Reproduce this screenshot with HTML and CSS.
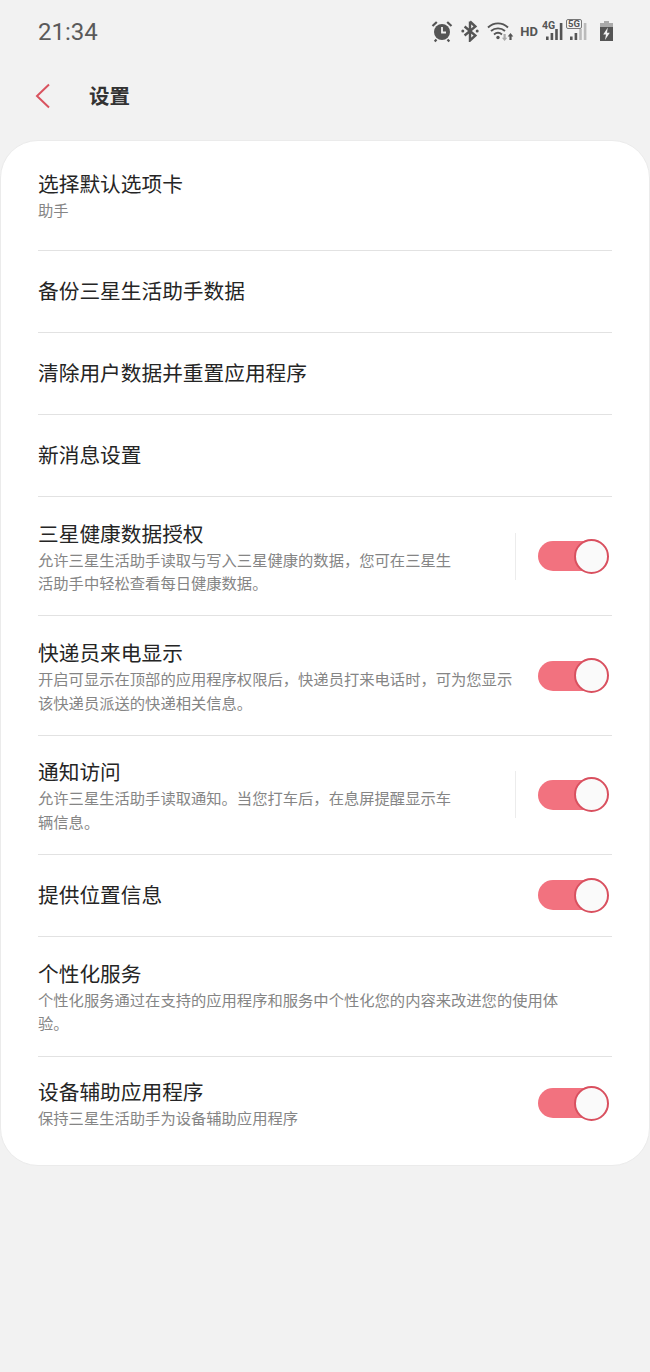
FILE: index.html
```html
<!DOCTYPE html>
<html lang="zh">
	<head>
		<title>设置</title>
		<meta charset="utf-8"/>
		<link rel="stylesheet" href="styles.css">
	</head>
	<body>
		<div class="statusbar">
			<span class="clock">21:34</span>
			<div class="status-icons">
				<svg class="ico" width="22" height="24" viewBox="0 0 22 24">
					<circle cx="11" cy="13" r="8" fill="#555"/>
					<path d="M11 8v5.500h4" fill="none" stroke="#f2f2f2" stroke-width="1.8"/>
					<path d="M1.500 7 5.800 3M20.500 7 16.200 3M5.500 20.500l-1.800 2M16.500 20.500l1.800 2" fill="none" stroke="#555" stroke-width="2.200"/>
				</svg>
				<svg class="ico" width="18" height="22" viewBox="0 0 18 22">
					<path d="M9 1.500v19l5.400-5-10.800-9M9 1.500l5.400 5-10.800 9" fill="none" stroke="#555" stroke-width="2.400"/>
					<circle cx="1.800" cy="11" r="1.500" fill="#555"/>
					<circle cx="16.200" cy="11" r="1.500" fill="#555"/>
				</svg>
				<svg class="ico wifi" width="27" height="22" viewBox="0 0 27 22">
					<path d="M1 7.500C6.800 2 15.200 2 21 7.500M4 11c4-3.500 10-3.500 14 0M7 14.500c2.400-2 5.600-2 8 0" fill="none" stroke="#555" stroke-width="1.900"/>
					<circle cx="11" cy="17.500" r="1.700" fill="#555"/>
					<path d="M16.500 14h2.200v3.800h1.600l-2.700 3.200-2.700-3.200h1.600z" fill="#aaa"/>
					<path d="M23.500 13l2.800 3.400h-1.700V20h-2.200v-3.600h-1.700z" fill="#555"/>
				</svg>
				<span class="hd">HD</span>
				<span class="net">
					<span class="net-label">4G</span>
					<svg width="18" height="17" viewBox="0 0 18 17">
						<path d="M0 17v-3.500h2.600V17zM4.600 17v-7h2.600v7zM9.200 17V6h2.600v11zM13.800 17V0h2.600v17z" fill="#555"/>
					</svg>
				</span>
				<span class="net">
					<span class="net-label boxed">5G</span>
					<svg width="18" height="17" viewBox="0 0 18 17">
						<path d="M0 17v-3.500h2.600V17zM4.600 17v-7h2.600v7z" fill="#555"/>
						<path d="M9.200 17V6h2.600v11zM13.800 17V0h2.600v17z" fill="#bbb"/>
					</svg>
				</span>
				<svg class="ico battery" width="13" height="20" viewBox="0 0 13 20">
					<path d="M4 0h5v2H4z" fill="#aaa"/>
					<path d="M0 2h13v4H0z" fill="#aaa"/>
					<path d="M0 6h13v14H0z" fill="#555"/>
					<path d="M7.800 6.500 3.200 13.500h2.800l-1 5.500 4.800-7.300H7z" fill="#f2f2f2"/>
				</svg>
			</div>
		</div>

		<header class="topbar">
			<svg class="back" width="16" height="26" viewBox="0 0 16 26">
				<path d="M14 1.500 2 13l12 11.500" fill="none" stroke="#d9535f" stroke-width="2"/>
			</svg>
			<h1>设置</h1>
		</header>

		<main class="card">
			<div class="row first">
				<div class="row-text">
					<div class="row-title">选择默认选项卡</div>
					<div class="row-sub">助手</div>
				</div>
			</div>
			<div class="row short">
				<div class="row-text"><div class="row-title">备份三星生活助手数据</div></div>
			</div>
			<div class="row short">
				<div class="row-text"><div class="row-title">清除用户数据并重置应用程序</div></div>
			</div>
			<div class="row short">
				<div class="row-text"><div class="row-title">新消息设置</div></div>
			</div>
			<div class="row tall">
				<div class="row-text narrow">
					<div class="row-title">三星健康数据授权</div>
					<div class="row-sub">允许三星生活助手读取与写入三星健康的数据，您可在三星生活助手中轻松查看每日健康数据。</div>
				</div>
				<span class="divider"></span>
				<span class="switch"></span>
			</div>
			<div class="row tall">
				<div class="row-text wide">
					<div class="row-title">快递员来电显示</div>
					<div class="row-sub">开启可显示在顶部的应用程序权限后，快递员打来电话时，可为您显示该快递员派送的快递相关信息。</div>
				</div>
				<span class="switch"></span>
			</div>
			<div class="row tall">
				<div class="row-text narrow">
					<div class="row-title">通知访问</div>
					<div class="row-sub">允许三星生活助手读取通知。当您打车后，在息屏提醒显示车辆信息。</div>
				</div>
				<span class="divider"></span>
				<span class="switch"></span>
			</div>
			<div class="row short">
				<div class="row-text"><div class="row-title">提供位置信息</div></div>
				<span class="switch"></span>
			</div>
			<div class="row tall">
				<div class="row-text">
					<div class="row-title">个性化服务</div>
					<div class="row-sub">个性化服务通过在支持的应用程序和服务中个性化您的内容来改进您的使用体验。</div>
				</div>
			</div>
			<div class="row last">
				<div class="row-text">
					<div class="row-title">设备辅助应用程序</div>
					<div class="row-sub">保持三星生活助手为设备辅助应用程序</div>
				</div>
				<span class="switch"></span>
			</div>
		</main>
	</body>
</html>
```

FILE: styles.css
```css
html, body {
	height: 100%;
}

body {
	margin: 0;
	padding: 0;
	background: #f2f2f2;
	font-family: "Noto Sans CJK SC", "Noto Sans", sans-serif;
	color: #252525;
	overflow: hidden;
}

.statusbar {
	height: 62px;
	padding: 0 37px 0 38px;
	display: flex;
	justify-content: space-between;
	align-items: center;
}

.clock {
	font-family: Roboto, sans-serif;
	font-size: 24px;
	color: #5a5a5a;
	padding-top: 2px;
}

.status-icons {
	display: flex;
	align-items: center;
	color: #555;
}

.ico {
	display: block;
	margin-right: 8px;
}

.ico.wifi {
	margin-right: 6px;
}

.ico.battery {
	margin-left: 10px;
	margin-right: 0;
}

.hd {
	font-family: Roboto, sans-serif;
	font-size: 13px;
	font-weight: 700;
	margin-right: 4px;
}

.net {
	position: relative;
	display: block;
	width: 24px;
	height: 22px;
	margin-bottom: 4px;
}

.net svg {
	position: absolute;
	right: 2px;
	bottom: 0;
}

.net-label {
	position: absolute;
	left: 0;
	top: 3px;
	font-family: Roboto, sans-serif;
	font-size: 10.500px;
	font-weight: 700;
	line-height: 9px;
}

.net-label.boxed {
	top: 1px;
	border: 1px solid #777;
	border-radius: 2px;
	font-size: 9.500px;
	line-height: 8px;
	padding: 0 1px;
}

.topbar {
	height: 66px;
	margin-bottom: 12px;
	display: flex;
	align-items: center;
}

.back {
	display: block;
	margin: 2px 0 0 35px;
}

h1 {
	margin: 0 0 0 38px;
	font-size: 20.500px;
	font-weight: 700;
	color: #333;
}

.card {
	background: #fff;
	border: 1px solid #ebebeb;
	border-radius: 38px;
	box-sizing: border-box;
	height: 1026px;
	padding: 0 37px;
}

.row {
	display: flex;
	align-items: center;
	border-bottom: 1px solid #e2e2e2;
	box-sizing: border-box;
}

.row.first {
	height: 110px;
	padding: 5px 0 6px;
}

.row.short {
	height: 82px;
}

.short .row-title {
	margin-bottom: 4px;
}

.row.tall {
	height: 119.400px;
	padding-top: 1px;
}

.row.last {
	height: 109px;
	border-bottom: 0;
	padding-bottom: 15px;
}

.row-text {
	flex: 1;
	min-width: 0;
	padding-right: 50px;
}

.row-text.narrow {
	flex: none;
	width: 477px;
	padding-right: 55px;
	box-sizing: border-box;
}

.row-text.wide {
	padding-right: 20px;
}

.row-title {
	font-size: 20.700px;
	line-height: 28px;
	color: #252525;
}

.row-sub {
	font-size: 15.300px;
	line-height: 23.500px;
	color: #858585;
	margin-top: 1px;
}

.divider {
	display: block;
	width: 1px;
	height: 47px;
	background: #ececec;
	flex: none;
	margin-top: -1px;
}

.switch {
	position: relative;
	display: block;
	flex: none;
	margin: -1px 3px 0 auto;
	width: 71px;
	height: 35px;
}

.switch::before {
	content: "";
	position: absolute;
	left: 0;
	top: 2.500px;
	width: 60px;
	height: 30px;
	border-radius: 15px;
	background: #f2727f;
}

.switch::after {
	content: "";
	position: absolute;
	right: 0;
	top: 0;
	width: 31px;
	height: 31px;
	border: 2px solid #d9505f;
	border-radius: 50%;
	background: #fafafa;
}
```
